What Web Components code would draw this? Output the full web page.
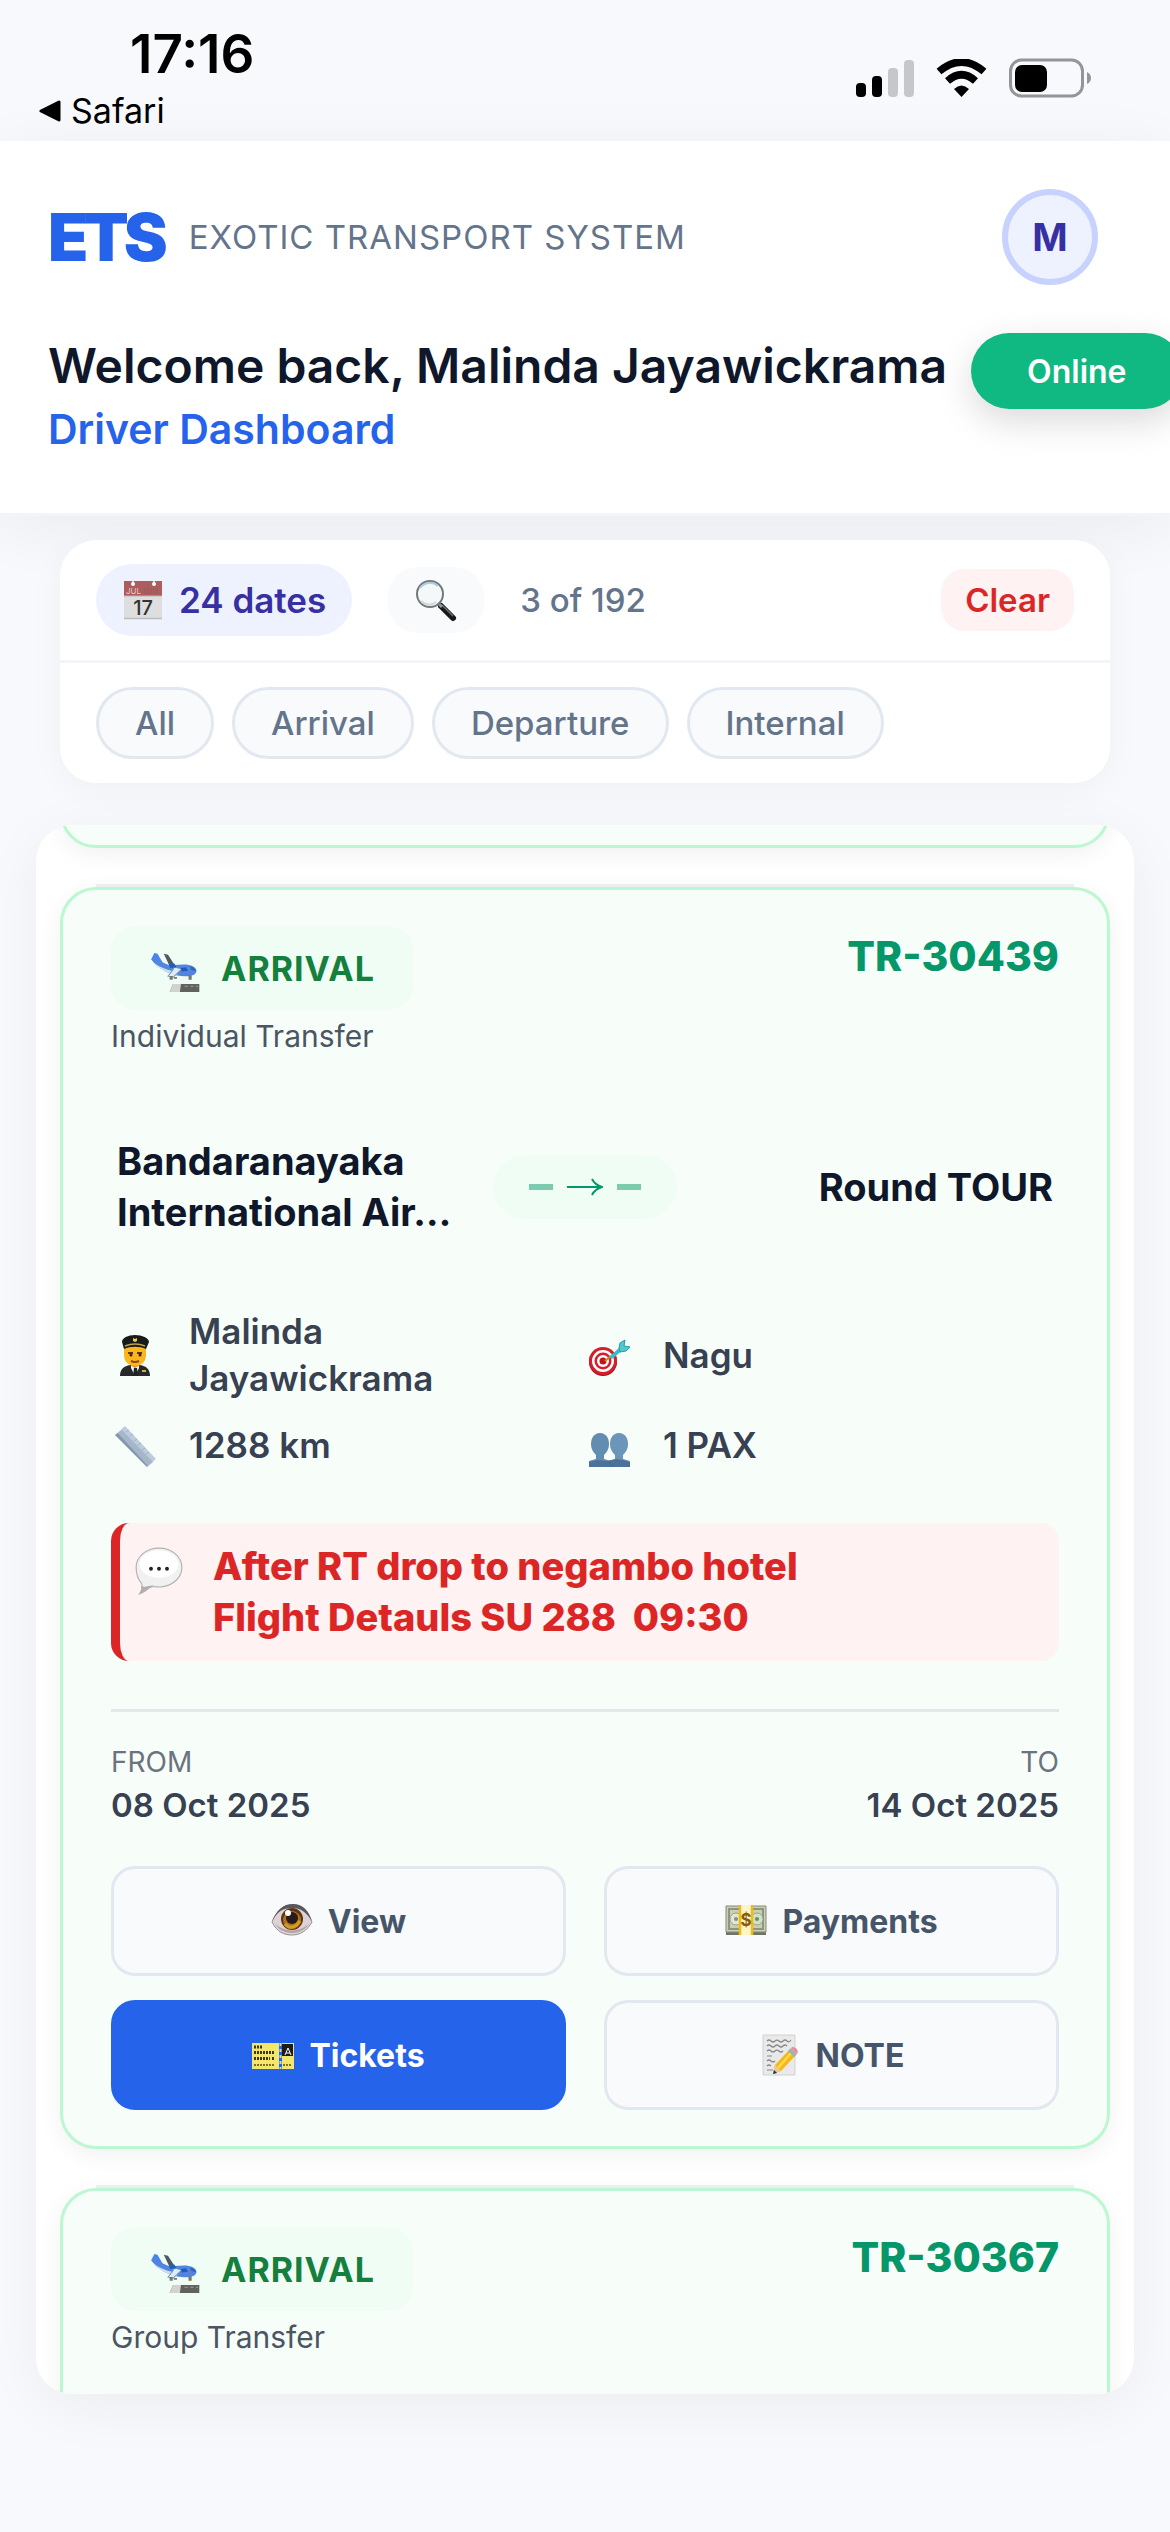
<!DOCTYPE html>
<html lang="en">
<head>
<meta charset="utf-8">
<meta name="viewport" content="width=device-width, initial-scale=1">
<title>ETS Driver Dashboard</title>
<style>
    html, body {
        margin: 0;
        height: 100%;
    }
    body {
        background: #f7f9fd;
        color: #0f172a;
        font-family: Inter, "Liberation Sans", sans-serif;
        overflow: hidden;
    }
</style>
</head>
<body>

<ets-app>
    <ets-status-bar time="17:16" back="Safari"></ets-status-bar>
    <ets-header user="Malinda Jayawickrama" initial="M" status="Online">Driver Dashboard</ets-header>
    <ets-filter-bar dates="24 dates" count="3 of 192">
        <ets-chip>All</ets-chip>
        <ets-chip>Arrival</ets-chip>
        <ets-chip>Departure</ets-chip>
        <ets-chip>Internal</ets-chip>
    </ets-filter-bar>
    <ets-trip-list>
        <ets-trip-card kind="ARRIVAL" code="TR-30439">
            <span slot="type">Individual Transfer</span>
            <ets-route>
                <span slot="from">Bandaranayaka International Air…</span>
                <span slot="to">Round TOUR</span>
            </ets-route>
            <ets-details>
                <ets-detail icon="pilot">Malinda Jayawickrama</ets-detail>
                <ets-detail icon="dart">Nagu</ets-detail>
                <ets-detail icon="ruler">1288 km</ets-detail>
                <ets-detail icon="people">1 PAX</ets-detail>
            </ets-details>
            <ets-note>After RT drop to negambo hotel
Flight Detauls SU 288 &nbsp;09:30</ets-note>
            <ets-dates from="08 Oct 2025" to="14 Oct 2025"></ets-dates>
            <ets-actions>
                <ets-action icon="eye">View</ets-action>
                <ets-action icon="money">Payments</ets-action>
                <ets-action icon="ticket" primary>Tickets</ets-action>
                <ets-action icon="memo">NOTE</ets-action>
            </ets-actions>
        </ets-trip-card>
        <ets-trip-card kind="ARRIVAL" code="TR-30367">
            <span slot="type">Group Transfer</span>
        </ets-trip-card>
    </ets-trip-list>
</ets-app>

<script>
const ICONS = {
    calendar: `
        <path d="M2 2h38v38H2z" fill="#dedede"/>
        <path d="M2 2h38v15H2z" fill="#ad5d5d"/>
        <path d="M2 17h38" stroke="#b9b9b9"/>
        <path d="M2 39.5h38" stroke="#bdbdbd" stroke-width="1.5"/>
        <circle cx="11" cy="5" r="2" fill="#fff"/><circle cx="32" cy="5" r="2" fill="#fff"/>
        <path d="M11 1v3M32 1v3" stroke="#f4eeee" stroke-width="1.5"/>
        <path d="M23 9v6M26 8v7M29 9v6M32 9v6M35 8v7" stroke="#97595a"/>
        <text x="4" y="15" font-size="8" font-weight="400" fill="#e6caca">JUL</text>
        <text x="21" y="36" font-size="20" font-weight="500" text-anchor="middle" fill="#333">17</text>`,
    search: `
        <path d="M26 27l12 12" stroke="#16181a" stroke-width="6" stroke-linecap="round"/>
        <path d="M27 26l11 11" stroke="#68717a" stroke-width="1.5"/>
        <path d="M22 23l5 5" stroke="#93999c" stroke-width="3"/>
        <circle cx="15" cy="15" r="13" fill="#f4f8f9" stroke="#71797d" stroke-width="2"/>
        <path d="M5 9a12 12 0 0 1 18-2" fill="none" stroke="#a9cbe3" stroke-width="2"/>
        <path d="M6 22a11 11 0 0 0 15 1" fill="none" stroke="#d3d8da" stroke-width="2"/>`,
    plane: `
        <g transform="translate(1 7) scale(.92 .78)">
            <path d="M1 8l3-7 3 1 6 12-6 2z" fill="#4c83ec"/>
            <path d="M1 8l8 2 9 5 14-1c7 0 12 3 12 7 0 5-6 7-14 6-11-1-22-8-29-19z" fill="#5385df"/>
            <path d="M4 12c5 5 13 9 23 10l-2 4C15 23 8 19 4 12z" fill="#c9dff0"/>
            <path d="M13 2l4 1 7 13-5 1z" fill="#4d5964"/>
            <path d="M23 17l7 2-8 9-5-1 4-6z" fill="#dcebf4" stroke="#7794ae"/>
            <path d="M18 14l5-1 2 4-6 1zM29 18l5-1 2 4-6 1z" fill="#1761c5"/>
            <path d="M38 16c3 1 5 3 6 6l-5-2z" fill="#3163bd"/>
            <path d="M20 27v4M24 28v2M38 26v5" stroke="#777" stroke-width="3"/>
        </g>
        <path d="M21 35h23v7H18z" fill="#60625d"/>
        <path d="M21 35h7l-1 7h-9z" fill="#d1d4ce"/>
        <path d="M31 37h12" stroke="#999b94" stroke-dasharray="3 2"/>`,
    pilot: `
        <path d="M6 42c0-7 4-10 10-11h10c6 1 10 4 10 11z" fill="#26292c"/>
        <path d="M17 29h8v5l-4 8-4-8z" fill="#f4f4f4"/>
        <path d="M20 34h3l1 8h-5z" fill="#202226"/>
        <path d="M16 25h10v6l-5 3-5-3z" fill="#df9916"/>
        <path d="M10 12h22v9c0 7-5 11-11 11s-11-4-11-11z" fill="#fbb51d"/>
        <path d="M14 19h5M23 19h5" stroke="#5b3b11" stroke-width="2"/>
        <circle cx="17" cy="21" r="1.500" fill="#332316"/><circle cx="26" cy="21" r="1.500" fill="#332316"/>
        <path d="M17 27q4 2 8 0" fill="none" stroke="#8d4a14" stroke-width="2"/>
        <path d="M8 8c0-4 6-7 13-7s14 3 14 7l-3 7c-6-3-16-3-22 0z" fill="#191a1c"/>
        <path d="M11 12q10-4 20 0" fill="none" stroke="#bfa34b" stroke-width="1.500"/>
        <path d="M19 4l2 1 2-1v3l-2 1-2-1z" fill="#f2cf49"/>
        <path d="M28 37h4" stroke="#d7ae36" stroke-width="2"/>`,
    dart: `
        <circle cx="15" cy="28" r="14" fill="#941219"/>
        <circle cx="15" cy="27" r="14" fill="#d61e2a"/>
        <circle cx="15" cy="27" r="11" fill="#fff"/>
        <circle cx="15" cy="27" r="8.500" fill="#d61e2a"/>
        <circle cx="15" cy="27" r="6" fill="#fff"/>
        <circle cx="15" cy="27" r="3.500" fill="#c5121d"/>
        <path d="M17 27l6-5" stroke="#c18b1e" stroke-width="2"/>
        <path d="M21 23l11-10 3 3-11 9z" fill="#35bfc8"/>
        <path d="M31 14l1-5 5-3-1 6 6 1-4 4-6 1z" fill="#51c9ce" stroke="#229ba6"/>`,
    ruler: `
        <path d="M1 10l10-9 31 33-9 8z" fill="#bdcddd"/>
        <path d="M1 10l3-2 30 32-1 2z" fill="#8599ae"/>
        <path d="M4 8l4-3 31 32-5 4z" fill="#a5b6c8"/>
        <path d="M12 7l3-2M16 11l3-2M20 16l3-2M24 20l3-2M28 25l3-2M32 29l3-2" stroke="#9fb2c6"/>`,
    people: `
        <path d="M12 8c6 0 9 5 9 11 0 5-2 8-5 11v4l7 2v6H1v-6l7-2v-4c-3-3-5-6-5-11 0-6 3-11 9-11z" fill="#638cb1"/>
        <path d="M31 8c6 0 9 5 9 11 0 5-2 8-5 11v4l7 2v6H21v-6l6-2v-4c-3-3-5-6-5-11 0-6 3-11 9-11z" fill="#6b96b9"/>
        <path d="M1 37l8-2 10 1 9-2 7 1 7 2v5H1z" fill="#4d7299"/>
        <path d="M21 36l5 6" stroke="#416b94"/>`,
    bubble: `
        <path d="M21 1c11 0 20 7 20 17 0 9-8 16-19 17-4 0-8-1-10 1-2 2-5 4-8 5 2-3 3-5 2-9C3 29 1 24 1 18 1 8 10 1 21 1z" fill="#f1f1f1" stroke="#b2b2b2"/>
        <path d="M5 34c4 2 8-1 12 0-5 2-9 6-13 7 2-3 2-5 1-7z" fill="#afafaf"/>
        <ellipse cx="21" cy="15" rx="17" ry="12" fill="#fff"/>
        <circle cx="14" cy="19" r="1.700" fill="#222"/><circle cx="21" cy="19" r="1.700" fill="#222"/><circle cx="28" cy="19" r="1.700" fill="#222"/>`,
    eye: `
        <path d="M1 22C6 10 12 5 22 5c9 0 15 7 19 17-5 9-12 13-20 13S6 32 1 22z" fill="#ddd3d7" stroke="#999095"/>
        <path d="M1 21C6 10 12 4 22 4s16 7 19 17C35 12 30 8 21 8S7 11 1 21z" fill="#59565e"/>
        <path d="M4 24q17 13 34 0c-8 12-26 12-34 0z" fill="#b6a3a6"/>
        <circle cx="21" cy="19" r="11" fill="#5d3516"/>
        <circle cx="21" cy="20" r="9" fill="#aa741b"/>
        <path d="M14 24q7 8 15-3" fill="none" stroke="#d69c22" stroke-width="3"/>
        <circle cx="21" cy="18" r="6" fill="#281b19"/>
        <circle cx="17" cy="13" r="3" fill="#fff"/>`,
    money: `
        <path d="M1 7h40v28H1z" fill="#6f7569"/>
        <path d="M1 6h40v26H1z" fill="#cbceb7" stroke="#888b79"/>
        <path d="M4 9h34v20H4z" fill="none" stroke="#8f967f" stroke-width="2"/>
        <circle cx="11" cy="19" r="6" fill="#e4e5d6" stroke="#9ba38c"/>
        <circle cx="32" cy="19" r="6" fill="#d4dfc8" stroke="#9ba38c"/>
        <circle cx="11" cy="19" r="2" fill="#8a917e"/><circle cx="32" cy="19" r="2" fill="#4e9a63"/>
        <path d="M14 5h14v30H14z" fill="#fff3c8"/>
        <path d="M15 5v30M27 5v30" stroke="#efbd12" stroke-width="2.500"/>
        <text x="21" y="26" font-size="17" font-weight="700" text-anchor="middle" fill="#845d0c">$</text>`,
    ticket: `
        <path d="M0 9h27v26H0z" fill="#f4e66a"/><path d="M30 9h12v26H30z" fill="#f4e66a"/>
        <path d="M28.500 9v26" stroke="#e8dc78" stroke-width="2" stroke-dasharray="3 3"/>
        <path d="M30 10h11v12H30z" fill="#1c1c18"/>
        <path d="M33 21l3-7 3 7M34 19h4" fill="none" stroke="#fff"/>
        <path d="M2 13h9M2 18.500h21M2 24.500h16M20 24.500h3" stroke="#39371f" stroke-width="3" stroke-dasharray="2 1"/>
        <path d="M2 31h21M31 31h9" stroke="#78702a" stroke-width="2" stroke-dasharray="2 1"/>`,
    memo: `
        <path d="M4 1h32v40H4z" fill="#e9e9e9" stroke="#d2d2d2"/>
        <path d="M8 7q2-2 4 0t4 0 4 0 4 0 4 0 4-1M8 12q2-2 4 0t4 0 4 0 4 0 4 0M8 17q2-2 4 0t4 0 4 0 4 0M8 22h5M8 27q2-2 4 0t4 0M8 32q2-2 4 0M8 36h6" fill="none" stroke="#888" stroke-width="1.200"/>
        <path d="M14 40l2-9 15-16 6 6-15 16z" fill="#f5b817"/>
        <path d="M19 34l14-16" stroke="#ffdc52" stroke-width="2"/>
        <path d="M14 40l2-9 6 6z" fill="#e7c99c"/><path d="M14 40l1-4 3 3z" fill="#333"/>
        <path d="M29 17l3-3 6 6-3 3z" fill="#9eb2bb"/>
        <path d="M32 14c2-3 9 2 6 6z" fill="#ee8892"/>`
};

// Small base: renders the template once, when the attributes are there.
class EtsElement extends HTMLElement {
    constructor() {
        super();
        this._root = this.attachShadow({mode: 'open'});
    }

    connectedCallback() {
        if (!this._root.firstChild) {
            this._root.innerHTML = this.render();
        }
    }

    attr(name) {
        return this.getAttribute(name) || '';
    }
}

class EtsApp extends EtsElement {
    render() {
        return `
        <style>
            :host {
                display: flex;
                flex-direction: column;
                height: 100vh;
                overflow: hidden;
            }
        </style>
        <slot></slot>
        `;
    }
}

class EtsIcon extends EtsElement {
    render() {
        return `
        <style>
            :host { display: inline-flex; flex: none; width: 42px; height: 42px; }
            svg { width: 100%; height: 100%; overflow: visible; }
        </style>
        <svg viewBox="0 0 42 42" aria-hidden="true">${ICONS[this.attr('name')]}</svg>
        `;
    }
}

class EtsStatusBar extends EtsElement {
    render() {
        return `
        <style>
            :host {
                display: flex;
                justify-content: space-between;
                box-sizing: border-box;
                height: 141px;
                padding: 24px 78px 0 39px;
                color: #000;
            }
            time {
                display: block;
                padding-left: 91px;
                font-size: 53px;
                line-height: 60px;
                font-weight: 600;
            }
            a {
                display: flex;
                align-items: center;
                gap: 10px;
                color: inherit;
                font-size: 34px;
                line-height: 54px;
                text-decoration: none;
            }
            .icons { display: flex; align-items: center; gap: 22px; height: 40px; padding-top: 34px; }
        </style>
        <div>
            <time>${this.attr('time')}</time>
            <a href="#"><svg width="22" height="22" viewBox="0 0 22 22"><path d="M2 11L20 2v18z" stroke="#000" stroke-width="3" stroke-linejoin="round"/></svg>${this.attr('back')}</a>
        </div>
        <div class="icons">
            <svg width="58" height="38" viewBox="0 0 58 38">
                <rect y="24" width="10" height="14" rx="4"/>
                <rect x="16" y="17" width="10" height="21" rx="4"/>
                <rect x="32" y="9" width="10" height="29" rx="4" fill="#c6c7ca"/>
                <rect x="48" y="1" width="10" height="37" rx="4" fill="#c6c7ca"/>
            </svg>
            <svg width="51" height="38" viewBox="0 0 51 38">
                <path d="M3 12.500Q25.500-6.500 48 12.500" fill="none" stroke="#000" stroke-width="7.500"/>
                <path d="M11.500 22Q25.500 9.500 39.500 22" fill="none" stroke="#000" stroke-width="7.500"/>
                <path d="M18 30q7.500-7 15 0l-7.500 8z"/>
            </svg>
            <svg width="83" height="40" viewBox="0 0 83 40">
                <rect x="1.500" y="2" width="72" height="36" rx="11" fill="none" stroke="#949598" stroke-width="3"/>
                <rect x="6" y="7" width="32" height="27" rx="7"/>
                <path d="M78 14q4 2 4 6t-4 6z" fill="#949598"/>
            </svg>
        </div>
        `;
    }
}

class EtsHeader extends EtsElement {
    render() {
        return `
        <style>
            :host {
                display: block;
                position: relative;
                padding: 48px 72px 54px 48px;
                background: #fff;
                border-bottom: 3px solid #f1f5f9;
                box-shadow: 0 12px 60px rgba(0, 0, 0, 0.06);
            }
            .brand { display: flex; align-items: center; gap: 26px; margin-bottom: 48px; }
            .logo { color: #2563eb; font-size: 66px; font-weight: 900; line-height: 72px; letter-spacing: -5px; }
            .name { flex: 1; color: #64748b; font-size: 33px; letter-spacing: 1px; }
            .avatar {
                box-sizing: border-box;
                width: 96px;
                height: 96px;
                padding: 0;
                border: 6px solid #c7d2fe;
                border-radius: 50%;
                background: #eef2ff;
                color: #3730a3;
                font: 700 38px Inter, sans-serif;
            }
            .welcome { display: flex; align-items: flex-start; gap: 24px; white-space: nowrap; }
            h1 { margin: 0; font-size: 48px; line-height: 66px; font-weight: 600; }
            h2 { margin: 0; color: #2563eb; font-size: 41px; line-height: 60px; font-weight: 600; }
            .status {
                flex: none;
                height: 76px;
                padding: 0 56px;
                border: 0;
                border-radius: 38px;
                background: #10b981;
                box-shadow: 0 12px 36px rgba(0, 0, 0, 0.15);
                color: #fff;
                font: 600 32px Inter, sans-serif;
            }
        </style>
        <div class="brand">
            <span class="logo">ETS</span>
            <span class="name">EXOTIC TRANSPORT SYSTEM</span>
            <button class="avatar">${this.attr('initial')}</button>
        </div>
        <div class="welcome">
            <div>
                <h1>Welcome back, ${this.attr('user')}</h1>
                <h2><slot></slot></h2>
            </div>
            <button class="status">${this.attr('status')}</button>
        </div>
        `;
    }
}

class EtsChip extends EtsElement {
    render() {
        return `
        <style>
            :host { display: block; }
            button {
                height: 72px;
                padding: 0 36px;
                border: 3px solid #e2e8f0;
                border-radius: 36px;
                background: #f8fafc;
                color: #64748b;
                font: 500 33px Inter, sans-serif;
            }
        </style>
        <button><slot></slot></button>
        `;
    }
}

class EtsFilterBar extends EtsElement {
    render() {
        return `
        <style>
            :host {
                display: block;
                position: relative;
                margin: 24px 60px 42px;
                border-radius: 36px;
                background: #fff;
                box-shadow: 0 6px 36px rgba(0, 0, 0, 0.04);
            }
            .row { display: flex; align-items: center; height: 72px; padding: 24px 36px; }
            .row + .row { gap: 18px; border-top: 3px solid #f1f5f9; }
            button { border: 0; font: 600 33px Inter, sans-serif; }
            .dates {
                display: flex;
                align-items: center;
                gap: 15px;
                height: 72px;
                padding: 0 26px;
                border-radius: 36px;
                background: #eef2ff;
                color: #3730a3;
                font-size: 35px;
            }
            .search {
                display: flex;
                align-items: center;
                justify-content: center;
                width: 96px;
                height: 66px;
                margin: 0 36px;
                padding: 0;
                border-radius: 30px;
                background: #f8fafc;
            }
            .count { flex: 1; color: #64748b; font-size: 33px; font-weight: 500; }
            .clear {
                height: 62px;
                padding: 0 24px;
                border-radius: 24px;
                background: #fef2f2;
                color: #dc2626;
            }
        </style>
        <div class="row">
            <button class="dates"><ets-icon name="calendar"></ets-icon>${this.attr('dates')}</button>
            <button class="search" aria-label="Search"><ets-icon name="search"></ets-icon></button>
            <span class="count">${this.attr('count')}</span>
            <button class="clear">Clear</button>
        </div>
        <div class="row"><slot></slot></div>
        `;
    }
}

class EtsTripList extends EtsElement {
    render() {
        return `
        <style>
            :host {
                display: block;
                flex: 1;
                min-height: 0;
                margin: 0 36px 138px;
                padding: 0 24px;
                border-radius: 36px;
                background: #fff;
                box-shadow: 0 12px 60px rgba(0, 0, 0, 0.05);
                overflow: hidden;
            }
            /* tail of the card that is scrolled out above */
            .scrolled {
                box-sizing: border-box;
                height: 71px;
                margin-top: -48px;
                border: 3px solid #bbf7d0;
                border-radius: 36px;
                background: #f7fef9;
                box-shadow: 0 6px 24px rgba(0, 0, 0, 0.06);
            }
        </style>
        <div class="scrolled"></div>
        <slot></slot>
        `;
    }
}

class EtsTripCard extends EtsElement {
    render() {
        return `
        <style>
            :host { display: block; padding-top: 36px; }
            hr { height: 3px; margin: 0 36px; border: 0; background: #eef1f5; }
            article {
                min-height: 600px;
                padding: 36px 48px;
                border: 3px solid #bbf7d0;
                border-radius: 36px;
                background: #f7fef9;
                box-shadow: 0 6px 24px rgba(0, 0, 0, 0.06);
            }
            header { display: flex; justify-content: space-between; align-items: flex-start; }
            .badge {
                display: inline-flex;
                align-items: center;
                gap: 24px;
                height: 84px;
                padding: 0 38px;
                border-radius: 24px;
                background: #f0fdf4;
                color: #15803d;
                font-size: 34px;
                font-weight: 700;
                letter-spacing: 1px;
            }
            .badge ets-icon { width: 48px; height: 48px; }
            .type { margin-top: 6px; color: #4b5563; font-size: 30px; line-height: 40px; }
            .code { color: #059669; font-size: 41px; line-height: 60px; font-weight: 800; }
        </style>
        <hr>
        <article>
            <header>
                <div>
                    <div class="badge"><ets-icon name="plane"></ets-icon>${this.attr('kind')}</div>
                    <div class="type"><slot name="type"></slot></div>
                </div>
                <div class="code">${this.attr('code')}</div>
            </header>
            <slot></slot>
        </article>
        `;
    }
}

class EtsRoute extends EtsElement {
    render() {
        return `
        <style>
            :host {
                display: grid;
                grid-template-columns: 1fr auto 1fr;
                align-items: center;
                gap: 12px;
                padding: 80px 6px 70px;
                font-size: 38px;
                line-height: 51px;
                font-weight: 700;
            }
            .to { text-align: right; }
            .arrow {
                display: flex;
                align-items: center;
                gap: 14px;
                height: 64px;
                padding: 0 36px;
                border-radius: 32px;
                background: #f0fdf4;
            }
            i { width: 24px; height: 6px; background: #7ccbaf; }
        </style>
        <div><slot name="from"></slot></div>
        <div class="arrow">
            <i></i>
            <svg width="36" height="18" viewBox="0 0 36 18"><path d="M0 9h34M25 1q3 6 10 8-7 2-10 8" fill="none" stroke="#059669" stroke-width="2"/></svg>
            <i></i>
        </div>
        <div class="to"><slot name="to"></slot></div>
        `;
    }
}

class EtsDetails extends EtsElement {
    render() {
        return `
        <style>
            :host { display: grid; grid-template-columns: 1fr 1fr; row-gap: 20px; }
        </style>
        <slot></slot>
        `;
    }
}

class EtsDetail extends EtsElement {
    render() {
        return `
        <style>
            :host {
                display: flex;
                align-items: center;
                gap: 33px;
                padding: 0 36px 0 3px;
                color: #374151;
                font-size: 35px;
                line-height: 47px;
                font-weight: 600;
            }
        </style>
        <ets-icon name="${this.attr('icon')}"></ets-icon>
        <span><slot></slot></span>
        `;
    }
}

class EtsNote extends EtsElement {
    render() {
        return `
        <style>
            :host {
                display: flex;
                align-items: flex-start;
                gap: 30px;
                margin: 54px 0 48px;
                padding: 18px 15px;
                border-left: 9px solid #dc2626;
                border-radius: 18px;
                background: #fef2f2;
                color: #dc2626;
                font-size: 38px;
                line-height: 51px;
                font-weight: 800;
            }
            ets-icon { width: 48px; height: 48px; padding-top: 6px; }
            span { white-space: pre-line; }
        </style>
        <ets-icon name="bubble"></ets-icon>
        <span><slot></slot></span>
        `;
    }
}

class EtsDates extends EtsElement {
    render() {
        return `
        <style>
            :host {
                display: flex;
                justify-content: space-between;
                padding: 30px 0 38px;
                border-top: 3px solid #e5e7eb;
                color: #374151;
                font-size: 33px;
                line-height: 46px;
                font-weight: 600;
            }
            small { display: block; color: #6b7280; font-size: 28px; line-height: 40px; font-weight: 400; }
            .to { text-align: right; }
        </style>
        <div><small>FROM</small>${this.attr('from')}</div>
        <div class="to"><small>TO</small>${this.attr('to')}</div>
        `;
    }
}

class EtsActions extends EtsElement {
    render() {
        return `
        <style>
            :host { display: grid; grid-template-columns: 1fr 1fr; gap: 24px 38px; }
        </style>
        <slot></slot>
        `;
    }
}

class EtsAction extends EtsElement {
    render() {
        return `
        <style>
            :host { display: block; }
            button {
                display: flex;
                align-items: center;
                justify-content: center;
                gap: 15px;
                width: 100%;
                height: 110px;
                border: 3px solid #e2e8f0;
                border-radius: 24px;
                background: #f8fafc;
                color: #475569;
                font: 700 32px Inter, sans-serif;
            }
            :host([primary]) button { border-color: #2563eb; background: #2563eb; color: #fff; }
        </style>
        <button><ets-icon name="${this.attr('icon')}"></ets-icon><slot></slot></button>
        `;
    }
}

window.customElements.define('ets-icon', EtsIcon);
window.customElements.define('ets-app', EtsApp);
window.customElements.define('ets-status-bar', EtsStatusBar);
window.customElements.define('ets-header', EtsHeader);
window.customElements.define('ets-chip', EtsChip);
window.customElements.define('ets-filter-bar', EtsFilterBar);
window.customElements.define('ets-trip-list', EtsTripList);
window.customElements.define('ets-trip-card', EtsTripCard);
window.customElements.define('ets-route', EtsRoute);
window.customElements.define('ets-details', EtsDetails);
window.customElements.define('ets-detail', EtsDetail);
window.customElements.define('ets-note', EtsNote);
window.customElements.define('ets-dates', EtsDates);
window.customElements.define('ets-actions', EtsActions);
window.customElements.define('ets-action', EtsAction);
</script>
</body>
</html>
